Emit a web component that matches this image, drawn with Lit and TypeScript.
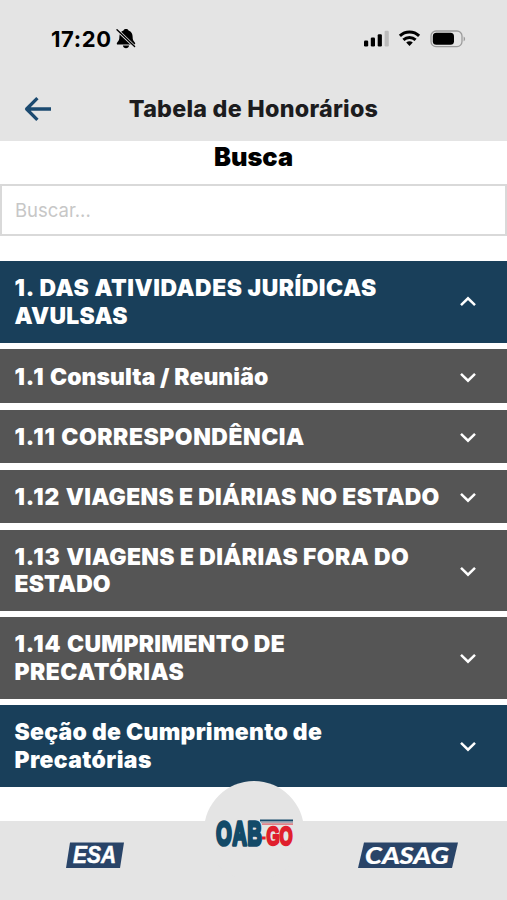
import { LitElement, html, css, nothing } from "lit";
import { customElement, property } from "lit/decorators.js";
import { classMap } from "lit/directives/class-map.js";

interface Line {
  number?: string;
  text: string;
  spacing: number;
}

interface Section {
  lines: Line[];
  primary?: boolean;
  open?: boolean;
}

const SECTIONS: Section[] = [
  {
    lines: [
      { number: "1.", text: "DAS ATIVIDADES JURÍDICAS", spacing: 0.53 },
      { text: "AVULSAS", spacing: 0.3 },
    ],
    primary: true,
    open: true,
  },
  { lines: [{ number: "1.1", text: "Consulta / Reunião", spacing: 0.1 }] },
  { lines: [{ number: "1.11", text: "CORRESPONDÊNCIA", spacing: 0.55 }] },
  { lines: [{ number: "1.12", text: "VIAGENS E DIÁRIAS NO ESTADO", spacing: 0.32 }] },
  {
    lines: [
      { number: "1.13", text: "VIAGENS E DIÁRIAS FORA DO", spacing: 0.38 },
      { text: "ESTADO", spacing: 0.15 },
    ],
  },
  {
    lines: [
      { number: "1.14", text: "CUMPRIMENTO DE", spacing: 0.3 },
      { text: "PRECATÓRIAS", spacing: 0.5 },
    ],
  },
  {
    lines: [
      { text: "Seção de Cumprimento de", spacing: 0.3 },
      { text: "Precatórias", spacing: 0.4 },
    ],
    primary: true,
  },
];

@customElement("accordion-row")
class AccordionRow extends LitElement {
  @property({ attribute: false }) section!: Section;

  static styles = css`
    :host {
      display: block;
    }
    .row {
      display: flex;
      align-items: center;
      justify-content: space-between;
      box-sizing: border-box;
      padding: 12.4px 29px 12.1px 14.5px;
      background: #555555;
      color: #fff;
    }
    .primary {
      padding-bottom: 13px;
      background: #193f5a;
    }
    .title {
      padding-top: 1.8px;
      font-weight: 870;
      font-size: 22.9px;
      line-height: 27.5px;
    }
    .line {
      display: block;
      white-space: nowrap;
    }
    .number {
      letter-spacing: 0.95px;
    }
    .chevron {
      display: block;
      flex: none;
    }
    .up {
      transform: rotate(180deg);
    }
  `;

  render() {
    const s = this.section;
    return html`
      <div class=${classMap({ row: true, primary: !!s.primary })}>
        <div class="title">
          ${s.lines.map(
            (l) =>
              html`<span class="line" style="letter-spacing:${l.spacing}px"
                >${l.number ? html`<span class="number">${l.number} </span>` : nothing}${l.text}</span
              >`
          )}
        </div>
        <svg class=${classMap({ chevron: true, up: !!s.open })} width="20" height="14" viewBox="0 0 20 14">
          <path d="M3 3.8 L10 10.7 L17 3.8" fill="none" stroke="#fff" stroke-width="2.5" />
        </svg>
      </div>
    `;
  }
}

@customElement("app-root")
class AppRoot extends LitElement {
  static styles = css`
    :host {
      display: flex;
      flex-direction: column;
      width: 507px;
      height: 900px;
      overflow: hidden;
      background: #fff;
      font-family: Inter, "Liberation Sans", sans-serif;
    }
    svg {
      display: block;
      flex: none;
      overflow: visible;
    }
    .top {
      flex: none;
      height: 140.5px;
      background: #e4e4e4;
    }
    .status {
      display: flex;
      align-items: center;
      height: 77px;
      padding: 0 41px 0 51px;
    }
    .clock {
      font-size: 22px;
      font-weight: 700;
      line-height: 28px;
      letter-spacing: 0.6px;
      color: #000;
      margin-right: 4px;
    }
    .system {
      margin-left: auto;
      display: flex;
      align-items: center;
      gap: 10px;
    }
    .nav {
      display: grid;
      grid-template-columns: 60px 1fr 60px;
      align-items: center;
      height: 63px;
    }
    .back {
      margin-left: 24px;
    }
    .heading {
      text-align: center;
      font-size: 23.3px;
      font-weight: 800;
      line-height: 28px;
      letter-spacing: 0.25px;
      color: #1c1c1e;
    }
    .search-title {
      margin: 0;
      height: 43.5px;
      line-height: 32px;
      text-align: center;
      font-size: 25.4px;
      font-weight: 880;
      color: #000;
    }
    .search {
      flex: none;
      box-sizing: border-box;
      height: 51.5px;
      border: 2px solid #d9d9d9;
      padding-left: 13px;
      line-height: 48px;
      font-size: 18.5px;
      color: #c7c7c7;
    }
    .list {
      flex: 1;
      min-height: 0;
      display: flex;
      flex-direction: column;
      gap: 6.3px;
      padding-top: 25.5px;
    }
    .tabs {
      position: relative;
      flex: none;
      height: 79px;
      display: flex;
      justify-content: space-between;
      box-sizing: border-box;
      padding: 20px 48px 0 65px;
      background: #e4e4e4;
    }
    .home {
      position: absolute;
      left: 204px;
      top: -40px;
    }
  `;

  render() {
    return html`
      <header class="top">
        <div class="status">
          <span class="clock">17:20</span>
          ${this.bell()}
          <div class="system">${this.signal()}${this.wifi()}${this.battery()}</div>
        </div>
        <div class="nav">
          <svg class="back" width="28" height="26" viewBox="0 0 28 26">
            <path d="M27 13 H3 M13.4 2.2 L2.6 13 L13.4 23.8" fill="none" stroke="#1b4a70" stroke-width="3.3" stroke-linejoin="round" />
          </svg>
          <div class="heading">Tabela de Honorários</div>
        </div>
      </header>
      <h2 class="search-title">Busca</h2>
      <div class="search">Buscar...</div>
      <main class="list">
        ${SECTIONS.map((s) => html`<accordion-row .section=${s}></accordion-row>`)}
      </main>
      <footer class="tabs">
        ${this.badge("ESA", 60, 28)} ${this.badge("CASAG", 102, 28)} ${this.home()}
      </footer>
    `;
  }

  private bell() {
    return html`<svg width="20" height="21" viewBox="0 0 20 21">
      <path d="M10 1 C8.4 1 7.7 1.6 7.5 2.5 C4.4 3.5 3.4 6 3.4 8.6 C3.4 12 2.6 13 1.2 14.4 C.4 15.3 .8 16.5 1.8 16.5 H18.2 C19.2 16.5 19.6 15.3 18.8 14.4 C17.4 13 16.6 12 16.6 8.6 C16.6 6 15.6 3.5 12.5 2.5 C12.3 1.6 11.6 1 10 1 Z M6.9 17.5 H13.1 C12.8 19.2 11.6 20.2 10 20.2 C8.4 20.2 7.2 19.2 6.9 17.5 Z" />
      <path d="M.5 1.4 L19 19" stroke="#e4e4e4" stroke-width="3" />
      <path d="M1 1.8 L18.6 18.6" stroke="#000" stroke-width="1.4" stroke-linecap="round" />
    </svg>`;
  }

  private signal() {
    return html`<svg width="25" height="17" viewBox="0 0 25 17">
      <rect x="0" y="10.5" width="4.2" height="6" rx="1.2" />
      <rect x="6.8" y="7.5" width="4.2" height="9" rx="1.2" />
      <rect x="13.7" y="4.2" width="4.2" height="12.3" rx="1.2" />
      <rect x="20.6" y="0.8" width="4.2" height="15.7" rx="1.2" fill="#bcbcbc" />
    </svg>`;
  }

  private wifi() {
    return html`<svg width="21" height="17" viewBox="0 0 21 17">
      <g fill="none" stroke="#000" stroke-width="3">
        <path d="M.9 5.9 C6.3 .7 14.7 .7 20.1 5.9" />
        <path d="M4.4 9.8 C7.9 6.6 13.1 6.6 16.6 9.8" />
      </g>
      <path d="M7.2 12.5 C9.1 10.9 11.9 10.9 13.8 12.5 L10.5 16 Z" />
    </svg>`;
  }

  private battery() {
    return html`<svg width="36" height="18" viewBox="0 0 36 18">
      <rect x="1" y="1" width="31" height="15.6" rx="5" fill="none" stroke="#9c9c9c" stroke-width="1.3" />
      <rect x="2.8" y="2.8" width="21.2" height="12" rx="3.6" />
      <path d="M33.6 6.4 C35.6 7.2 35.6 10.4 33.6 11.2 Z" fill="#9c9c9c" />
    </svg>`;
  }

  private badge(label: string, w: number, h: number) {
    const wide = label.length > 3;
    const lean = wide ? 6 : 4;
    return html`<svg width=${w} height=${h} viewBox="0 0 ${w} ${h}">
      <path d="M${lean + 1} 1.5 H${w - 1} L${w - lean - 1} ${h - 1} H1 Z" fill="#294468" />
      <text
        x="8"
        y=${wide ? 22.6 : 22}
        textLength=${wide ? 84 : 43}
        lengthAdjust="spacingAndGlyphs"
        font-family=${wide ? "Lato, sans-serif" : "'Liberation Sans', sans-serif"}
        font-weight=${wide ? 900 : 700}
        font-style="italic"
        font-size=${wide ? 23.5 : 23}
        fill="#fff"
        stroke="#fff"
        stroke-width=${wide ? 0.2 : 0.5}
      >${label}</text>
    </svg>`;
  }

  private home() {
    return html`<svg class="home" width="100" height="100" viewBox="0 0 100 100">
      <circle cx="50" cy="50" r="50" fill="#e4e4e4" />
      <path d="M56 39.6 H89" stroke="#174a6b" stroke-width="2" />
      <path d="M57 41.5 H89" stroke="#a9a6b0" stroke-width="1.5" />
      <path d="M58 43.1 H89" stroke="#e05a62" stroke-width="1.2" />
      <g font-family="'Liberation Sans', sans-serif" font-weight="700" stroke-linejoin="round">
        <text x="0" y="0" transform="translate(12.3 64.2) scale(.59 1)" font-size="33.5" fill="#134a68" stroke="#134a68" stroke-width="3.6" textLength="77" lengthAdjust="spacing">OAB</text>
        <text x="0" y="0" transform="translate(62.5 63.8) scale(.67 1)" font-size="25" fill="#e01f2d" stroke="#e01f2d" stroke-width="2.4">GO</text>
      </g>
      <rect x="58" y="55.5" width="3.6" height="3" fill="#e01f2d" />
    </svg>`;
  }
}
